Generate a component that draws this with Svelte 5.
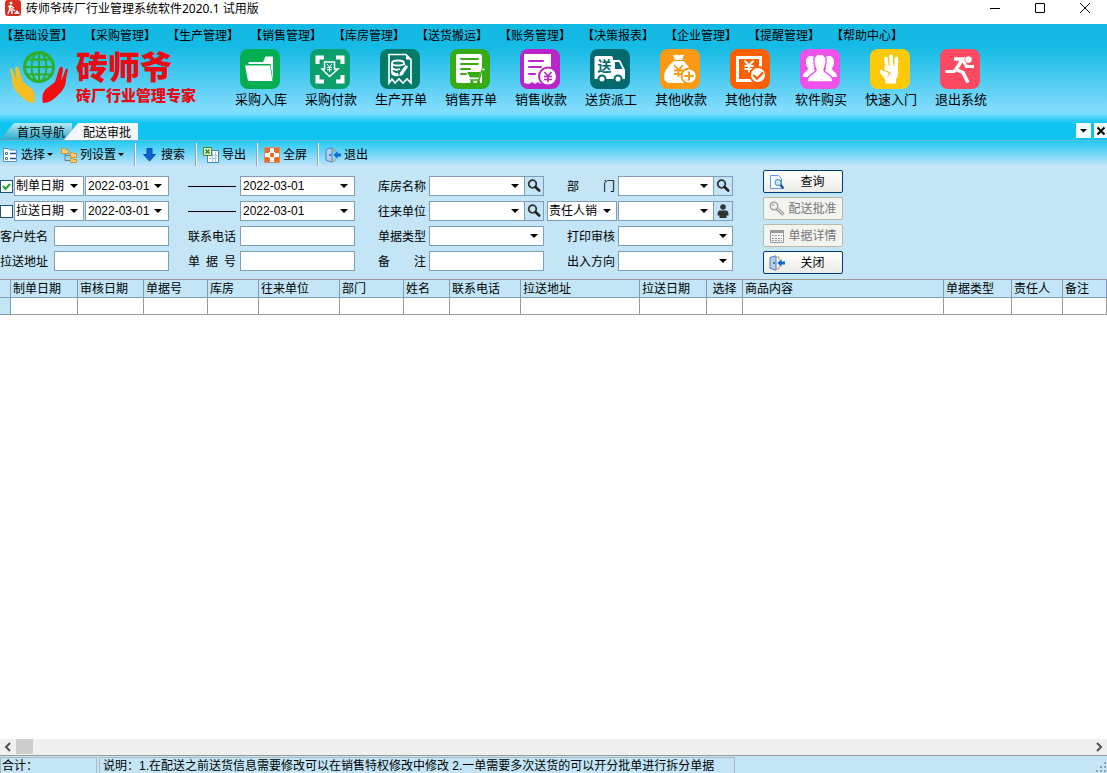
<script lang="ts">
    const menus = [
        "基础设置", "采购管理", "生产管理", "销售管理", "库房管理", "送货搬运",
        "账务管理", "决策报表", "企业管理", "提醒管理", "帮助中心",
    ];

    const shortcuts = [
        { icon: "folder", label: "采购入库", color: "#05ae50" },
        { icon: "scan", label: "采购付款", color: "#0c9f6e" },
        { icon: "receipt", label: "生产开单", color: "#067a68" },
        { icon: "cart", label: "销售开单", color: "#37ab14" },
        { icon: "bill", label: "销售收款", color: "#b924cb" },
        { icon: "truck", label: "送货派工", color: "#046a6f" },
        { icon: "bag", label: "其他收款", color: "#fb9a12" },
        { icon: "paid", label: "其他付款", color: "#fd6003" },
        { icon: "people", label: "软件购买", color: "#ee52ea" },
        { icon: "hand", label: "快速入门", color: "#fdc90b" },
        { icon: "run", label: "退出系统", color: "#fd4a62" },
    ];

    const columns = [
        { title: "制单日期", width: 67 },
        { title: "审核日期", width: 66 },
        { title: "单据号", width: 64 },
        { title: "库房", width: 51 },
        { title: "往来单位", width: 81 },
        { title: "部门", width: 64 },
        { title: "姓名", width: 46 },
        { title: "联系电话", width: 71 },
        { title: "拉送地址", width: 119 },
        { title: "拉送日期", width: 67 },
        { title: "选择", width: 36, center: true },
        { title: "商品内容", width: 201 },
        { title: "单据类型", width: 68 },
        { title: "责任人", width: 51 },
        { title: "备注", width: 0 },
    ];

    const date = "2022-03-01";
    let byMade = $state(true);
    let bySent = $state(false);
</script>

{#snippet door()}
    <svg class="ico" viewBox="0 0 16 16">
        <path d="M1 2.5 7 .8v14.4l-6-2z" fill="#b5d0ef" stroke="#4d7fbd" />
        <path d="M7.5 2H10v3M7.5 14H10v-3" fill="none" stroke="#c09a55" />
        <circle cx="5" cy="8" r="1" fill="#36598c" />
        <path d="M8.500 8l4-4v2.500H16v3h-3.500V12z" fill="#0b69d6" />
    </svg>
{/snippet}

{#snippet lens()}
    <svg class="ico" viewBox="0 0 16 16">
        <circle cx="6.5" cy="6" r="3.8" fill="none" stroke="#333" stroke-width="1.8" />
        <path d="M9.5 9l3.700 3.500" stroke="#222" stroke-width="2.600" stroke-linecap="round" />
    </svg>
{/snippet}

<div class="window">
    <header class="titlebar">
        <svg class="app-icon" viewBox="0 0 16 16">
            <rect width="16" height="16" rx="3" fill="#dc2a1c" />
            <circle cx="6" cy="3" r="1.5" fill="#fff" />
            <path d="M5.5 5 4.5 9l2.5 2v3M4.8 9 3 14M5.5 5.5 9 8M3 6l7 5" fill="none" stroke="#fff" stroke-width="1.4" />
            <path d="M9 14l3-4 3 4z" fill="#fff" />
        </svg>
        <h1>砖师爷砖厂行业管理系统软件2020.1 试用版</h1>
        <div class="win-buttons">
            <button aria-label="最小化"><svg viewBox="0 0 12 12"><path d="M1 6.5h10" /></svg></button>
            <button aria-label="最大化"><svg viewBox="0 0 12 12"><path d="M1.5 1.5h9v9h-9z" /></svg></button>
            <button aria-label="关闭窗口"><svg viewBox="0 0 12 12"><path d="M1 1l10 10M11 1 1 11" /></svg></button>
        </div>
    </header>

    <div class="banner">
        <nav class="menu">
            {#each menus as menu}
                <button>【{menu}】</button>
            {/each}
        </nav>

        <div class="launch">
            <div class="brand">
                <svg viewBox="0 0 60 56">
                    <g fill="none" stroke="#2fae23" stroke-width="2">
                        <circle cx="30" cy="18" r="14.5" stroke-width="3" />
                        <ellipse cx="30" cy="18" rx="7.5" ry="14.5" />
                        <path d="M30 3v30M15 18h30M18 10.500h24M18 25.500h24" />
                    </g>
                    <path d="M1 20c2-2 3 2 4 5l3 7-2-12c0-3 3-3 4 0l4 13 9 7c4 4 3 9 2 14-6 0-9-3-13-7C5 41 3 36 3 30z" fill="#f7be22" />
                    <path d="M59 20c-2-2-3 2-4 5l-3 7 2-12c0-3-3-3-4 0l-4 13-9 7c-4 4-4 9-3 14 6 0 10-3 14-7 7-6 9-11 9-17z" fill="#f20d10" />
                </svg>
                <div class="brand-text">
                    <strong>砖师爷</strong>
                    <span>砖厂行业管理专家</span>
                </div>
            </div>

            <div class="shortcuts">
                {#each shortcuts as item}
                    <button>
                        <svg viewBox="0 0 40 40">
                            <rect width="40" height="40" rx="8" fill={item.color} />
                            {#if item.icon == "folder"}
                                <path d="M8.500 13H23l2.500-5.500H33V31L30.500 15H8.500z" fill="#fff" />
                                <path d="M5 16.500h25L32.500 32H8z" fill="#fff" />
                            {:else if item.icon == "scan"}
                                <path d="M7.500 15V8.500H14M26 8.500h6.500V15M32.500 26v6.500H26M14 32.500H7.500V26" fill="none" stroke="#fff" stroke-width="4" />
                                <path d="M14.500 13h10v7H28l-8.500 7.500L12 20h2.500z" fill="none" stroke="#fff" stroke-width="1.500" />
                                <path d="M17 15l2.500 3 2.500-3M19.500 18v5M17 18.500h5M17 20.700h5" fill="none" stroke="#fff" />
                            {:else if item.icon == "receipt"}
                                <path d="M9 5.500h17l5 5V34l-4-4-4 4-4-4-4 4-3-4-3 4z" fill="none" stroke="#fff" stroke-width="1.600" />
                                <path d="M26 5.500v5h5z" fill="#fff" />
                                <g fill="none" stroke="#fff" stroke-width="1.800">
                                    <ellipse cx="18" cy="14" rx="6" ry="2.500" />
                                    <path d="M12 14v10c0 2 4 3 7 2M24 14v2M12 18.500c1 2 5 3 8 1.500M12 22.500c1 2 4 2.500 6 2" />
                                </g>
                                <path d="M25.500 15.500l3 2-6 9-3.500 1 .5-3.500z" fill="#fff" stroke="#067a68" stroke-width=".6" />
                            {:else if item.icon == "cart"}
                                <path d="M8 5h22a2 2 0 0 1 2 2v27H8a2 2 0 0 1-2-2V7a2 2 0 0 1 2-2z" fill="#fff" />
                                <path d="M11 10h17M11 15h17M11 20h9M11 25h5" stroke="#37ab14" stroke-width="2" stroke-linecap="round" />
                                <path d="M17 23h13.500l-1.500 5.500H20z" fill="#37ab14" />
                                <path d="M20 31h9l3-10.500h3" fill="none" stroke="#37ab14" stroke-width="1.500" />
                                <path d="M32 20.500h2.500" stroke="#fff" stroke-width="1.500" />
                                <circle cx="22" cy="33" r="1.700" fill="#37ab14" />
                                <circle cx="28.500" cy="33" r="1.700" fill="#37ab14" />
                            {:else if item.icon == "bill"}
                                <path d="M4 5h27v30l-4 0-3-2-3 2-3-2-3 2-3-2-3 2-5-1z" fill="#fff" />
                                <path d="M9 12h14M9 18h12M9 25h6" stroke="#b924cb" stroke-width="2" stroke-linecap="round" />
                                <circle cx="28" cy="27.500" r="9" fill="#fff" stroke="#b924cb" stroke-width="2" />
                                <path d="M24.500 23l3.500 4 3.500-4M28 27v6M24 27.500h8M24 30.500h8" fill="none" stroke="#b924cb" stroke-width="1.600" />
                            {:else if item.icon == "truck"}
                                <path d="M6.500 7H21a2 2 0 0 1 2 2v2h7l5 10v9H4.500V9a2 2 0 0 1 2-2z" fill="#fff" />
                                <path d="M25 13h4l3.500 7H25z" fill="#046a6f" />
                                <circle cx="12" cy="30" r="3.500" fill="#fff" stroke="#046a6f" stroke-width="2" />
                                <circle cx="28" cy="30" r="3.500" fill="#fff" stroke="#046a6f" stroke-width="2" />
                                <text x="7.500" y="22" fill="#046a6f" font-size="14" font-weight="700">送</text>
                            {:else if item.icon == "bag"}
                                <path d="M13 6c2 1 3-1 5 0s3-1 6 0l-2 5H15z" fill="#fff" />
                                <path d="M14 12h9c5 4 9 10 9 16 0 4-3 6-8 6H12c-5 0-8-2-8-6 0-6 5-12 10-16z" fill="#fff" />
                                <path d="M14 16l4.500 5 4.500-5M18.500 21v7M14 21.500h9M14 25h9" fill="none" stroke="#fb9a12" stroke-width="1.800" />
                                <circle cx="29" cy="27" r="7.500" fill="#fff" stroke="#fb9a12" stroke-width="1.800" />
                                <path d="M29 22.500v9M24.500 27h9" stroke="#fb9a12" stroke-width="2" />
                            {:else if item.icon == "paid"}
                                <path d="M6 7h26v26H6z" fill="#fff" />
                                <path d="M9 10h20v14l-5 6H9z" fill="#fd6003" />
                                <path d="M14.500 11.500l4.500 5 4.500-5M19 16.500v7M14.500 17h9M14.500 20h9" fill="none" stroke="#fff" stroke-width="2" />
                                <circle cx="28" cy="26" r="8" fill="#fff" stroke="#fd6003" stroke-width="2" />
                                <path d="M23.500 26l3.500 3.500 6-6" fill="none" stroke="#fd6003" stroke-width="2.400" />
                            {:else if item.icon == "people"}
                                <path d="M11 7c4 0 6 3 5 8-.5 3-2 4-2 5 0 2 4 2 5 8H3c0-5 4-5 5-8 0-2-2-3-2-6 0-4 1-7 5-7zM29 7c-4 0-6 3-5 8 .5 3 2 4 2 5 0 2-4 2-5 8h16c0-5-4-5-5-8 0-2 2-3 2-6 0-4-1-7-5-7z" fill="#fff" />
                                <path d="M20 5c5 0 7 4 6 9-.5 4-2 5-2 7 0 4 9 3 9 12H7c0-9 9-8 9-12 0-2-1.500-3-2-7-1-5 1-9 6-9z" fill="#fff" stroke="#ee52ea" stroke-width="1.500" />
                            {:else if item.icon == "hand"}
                                <path d="M17 18 16 9.500M21.500 18 21 7M26 18l.5-8.500" stroke="#fff" stroke-width="3.600" stroke-linecap="round" />
                                <path d="M14.500 17H28v8c0 3-2 4-2 6v3.500H15.500V31L10 23.500c-1-2 1-3 2.500-2.500l2 1z" fill="#fff" />
                                <path d="M12.500 20.500l7.500 3.500-2.500 3.500" fill="none" stroke="#fdb916" stroke-width="1.200" />
                            {:else}
                                <circle cx="28.500" cy="10.500" r="3.200" fill="#fff" />
                                <path d="M14 10h8.500L16 20.500l7 3 5 10" fill="none" stroke="#fff" stroke-width="3.500" />
                                <path d="M23 11.500l3.500 6H34M5.500 22.500h8.500l3-3" fill="none" stroke="#fff" stroke-width="3" />
                            {/if}
                        </svg>
                        <span>{item.label}</span>
                    </button>
                {/each}
            </div>
        </div>
    </div>

    <div class="tabs">
        <button class="tab">首页导航</button>
        <button class="tab active">配送审批</button>
        <div class="tab-tools">
            <button aria-label="标签列表"><i class="caret"></i></button>
            <button aria-label="关闭标签"><svg viewBox="0 0 10 10"><path d="M1.500 1.500l7 7M8.500 1.500l-7 7" stroke="#000" stroke-width="2" /></svg></button>
        </div>
    </div>

    <div class="toolbar">
        <div class="tool-group first">
            <button>
                <svg class="ico" viewBox="0 0 16 16">
                    <path d="M1.500 1.500h5l1 1.500h7v11.500h-13z" fill="#fff" stroke="#5b8fd0" />
                    <path d="M3.500 5.500h2v2h-2zM3.500 10.500h2v2h-2z" fill="none" stroke="#4a80c8" />
                    <path d="M8 6.500h6M8 11.500h6" stroke="#1f4fa0" stroke-width="1.500" />
                </svg>
                选择<i class="caret small"></i>
            </button>
            <button>
                <svg class="ico" viewBox="0 0 16 16">
                    <path d="M4 6v7.500h6M4 8.500h6" fill="none" stroke="#777" />
                    <path d="M.5 1.500h3l1 1h3v4h-7zM9.500 5.500h2l1 1h3v4h-6zM9.500 11.500h2l1 1h3v3h-6z" fill="#fbd277" stroke="#d1912d" />
                </svg>
                列设置<i class="caret small"></i>
            </button>
        </div>
        <div class="tool-group">
            <button>
                <svg class="ico" viewBox="0 0 16 16"><path d="M5 1.500h5v6h3.500L7.500 14 1.500 7.500H5z" fill="#0c62cf" stroke="#0a4aa8" /></svg>
                搜索
            </button>
        </div>
        <div class="tool-group">
            <button>
                <svg class="ico" viewBox="0 0 16 16">
                    <path d="M4.500 3.500h11v12h-11z" fill="#fff" stroke="#3e86c6" />
                    <path d="M6 8.500h8M6 11.500h8M9.500 5v10M12.500 5v10" stroke="#a9c9e7" />
                    <path d="M.5 .5h8v8h-8z" fill="#e6f6d8" stroke="#3e8c22" />
                    <path d="M2.500 2.500l4 4M6.500 2.500l-4 4" stroke="#2f8414" stroke-width="1.500" />
                </svg>
                导出
            </button>
        </div>
        <div class="tool-group">
            <button>
                <svg class="ico" viewBox="0 0 16 16">
                    <path d="M.5 .5h15v15H.5z" fill="#fff" stroke="#d98b61" />
                    <path d="M1 1h5v4H5v1H1zM10 1h5v5h-4V5h-1zM1 10h4v1h1v4H1zM11 10h4v5h-5v-4h1zM6 6h4v4H6z" fill="#ec6d28" />
                </svg>
                全屏
            </button>
        </div>
        <div class="tool-group">
            <button>{@render door()}退出</button>
        </div>
    </div>

    <form class="filters" onsubmit={(e) => e.preventDefault()}>
        <div class="group">
            <div class="pair">
                <input type="checkbox" aria-label="启用制单日期" bind:checked={byMade} />
                <select class="kind" aria-label="日期类型"><option>制单日期</option></select>
                <select class="date" aria-label="开始日期"><option>{date}</option></select>
            </div>
            <div class="pair">
                <input type="checkbox" aria-label="启用拉送日期" bind:checked={bySent} />
                <select class="kind" aria-label="第二日期类型"><option>拉送日期</option></select>
                <select class="date" aria-label="第二开始日期"><option>{date}</option></select>
            </div>
            <div class="field wide"><label for="customer">客户姓名</label><input id="customer" type="text" /></div>
            <div class="field wide"><label for="address">拉送地址</label><input id="address" type="text" /></div>
        </div>

        <div class="group">
            <div class="field"><span class="rule"></span><select class="date" aria-label="结束日期"><option>{date}</option></select></div>
            <div class="field"><span class="rule"></span><select class="date" aria-label="第二结束日期"><option>{date}</option></select></div>
            <div class="field"><label for="phone">联系电话</label><input id="phone" type="text" /></div>
            <div class="field"><label for="number">单 据 号</label><input id="number" type="text" /></div>
        </div>

        <div class="group third">
            <div class="field">
                <label for="store">库房名称</label>
                <div class="lookup"><select id="store"><option></option></select><button aria-label="查找库房">{@render lens()}</button></div>
            </div>
            <div class="field">
                <label for="partner">往来单位</label>
                <div class="lookup"><select id="partner"><option></option></select><button aria-label="查找单位">{@render lens()}</button></div>
            </div>
            <div class="field"><label for="type">单据类型</label><select id="type"><option></option></select></div>
            <div class="field"><label for="remark">备注</label><input id="remark" type="text" /></div>
        </div>

        <div class="group fourth">
            <div class="field">
                <label for="dept">部门</label>
                <div class="lookup"><select id="dept"><option></option></select><button aria-label="查找部门">{@render lens()}</button></div>
            </div>
            <div class="field owner">
                <select class="kind" aria-label="责任人类型"><option>责任人销</option></select>
                <div class="lookup">
                    <select aria-label="责任人"><option></option></select>
                    <button aria-label="查找责任人">
                        <svg class="ico" viewBox="0 0 16 16">
                            <circle cx="8" cy="4" r="2.800" fill="#333" />
                            <path d="M5 7.500h6c2 0 2.500 2 2.500 5h-2V15h-7v-2.500h-2c0-3 .5-5 2.500-5z" fill="#333" />
                        </svg>
                    </button>
                </div>
            </div>
            <div class="field"><label for="print">打印审核</label><select id="print"><option></option></select></div>
            <div class="field"><label for="direction">出入方向</label><select id="direction"><option></option></select></div>
        </div>

        <div class="actions">
            <button>
                <svg class="ico" viewBox="0 0 16 16">
                    <path d="M1.500 1.500h8l3 3v10h-11z" fill="#f3f9ff" stroke="#5f9ad2" />
                    <circle cx="9" cy="8.500" r="3" fill="#c3edf8" stroke="#3c89b6" />
                    <path d="M11.500 11l3 3.500" stroke="#17489c" stroke-width="2.200" />
                </svg>
                <span>查询</span>
            </button>
            <button disabled>
                <svg class="ico" viewBox="0 0 16 16">
                    <circle cx="5" cy="5" r="3.800" fill="none" stroke="#a2a2a2" stroke-width="1.500" />
                    <path d="M7.500 7.500l7 6" stroke="#a2a2a2" stroke-width="3.500" />
                    <path d="M8 7.500l6 5.500" stroke="#eee" />
                    <circle cx="4" cy="4" r="1" fill="#a2a2a2" />
                </svg>
                <span>配送批准</span>
            </button>
            <button disabled>
                <svg class="ico" viewBox="0 0 16 16">
                    <path d="M1.500 2.500h13v12h-13z" fill="#f5f5f5" stroke="#999" />
                    <path d="M1 2h14v3H1z" fill="#999" />
                    <path d="M3 7.500h10M3 10.500h10M3 12.500h10" stroke="#999" stroke-dasharray="2 1" />
                </svg>
                <span>单据详情</span>
            </button>
            <button>{@render door()}<span>关闭</span></button>
        </div>
    </form>

    <main class="grid">
        <table>
            <colgroup>
                <col style="width: 11px" />
                {#each columns as col}
                    <col style={col.width ? `width: ${col.width}px` : ""} />
                {/each}
            </colgroup>
            <thead>
                <tr>
                    <th></th>
                    {#each columns as col}
                        <th class:center={col.center}>{col.title}</th>
                    {/each}
                </tr>
            </thead>
            <tbody>
                <tr>
                    <td class="marker"></td>
                    {#each columns as col}
                        <td></td>
                    {/each}
                </tr>
            </tbody>
        </table>
    </main>

    <div class="scrollbar">
        <button aria-label="向左滚动"><svg viewBox="0 0 8 10"><path d="M6 1 2 5l4 4" /></svg></button>
        <div class="track"><div class="thumb"></div></div>
        <button aria-label="向右滚动"><svg viewBox="0 0 8 10"><path d="M2 1l4 4-4 4" /></svg></button>
    </div>

    <footer class="status">
        <div class="total">合计：</div>
        <div class="note">说明：1.在配送之前送货信息需要修改可以在销售特权修改中修改 2.一单需要多次送货的可以开分批单进行拆分单据</div>
        <svg class="grip" viewBox="0 0 12 12">
            <path d="M9 1h2v2H9zM5 5h2v2H5zM9 5h2v2H9zM1 9h2v2H1zM5 9h2v2H5zM9 9h2v2H9z" fill="#929da5" />
        </svg>
    </footer>
</div>

<style>
    :global(body) {
        margin: 0;
    }

    .window {
        display: flex;
        flex-direction: column;
        min-height: 100vh;
        background: #fff;
        color: #000;
        font: 12px/16px "Liberation Sans", "Noto Sans CJK SC", sans-serif;
        white-space: nowrap;
    }

    .window * {
        box-sizing: border-box;
    }

    button,
    input,
    select {
        margin: 0;
        padding: 0;
        font: inherit;
        color: inherit;
        border-radius: 0;
    }

    button {
        border: 0;
        background: none;
    }

    svg {
        display: block;
        flex: none;
    }

    .ico {
        width: 16px;
        height: 16px;
    }

    .caret {
        width: 8px;
        height: 4px;
        background: #000;
        clip-path: polygon(0 0, 100% 0, 50% 100%);
    }

    .caret.small {
        width: 6px;
        height: 3px;
        margin-left: -1px;
    }

    .titlebar {
        display: flex;
        height: 24px;
        padding-left: 5px;
        gap: 5px;
    }

    .app-icon {
        width: 16px;
        height: 16px;
    }

    h1 {
        flex: 1;
        margin: 0;
        font: 12px/18px "Noto Sans", "Noto Sans CJK SC", sans-serif;
    }

    .win-buttons {
        display: flex;
        height: 16px;
    }

    .win-buttons button {
        display: flex;
        width: 45px;
        align-items: center;
        justify-content: center;
    }

    .win-buttons svg {
        width: 12px;
        height: 12px;
        fill: none;
        stroke: #000;
    }

    .banner {
        height: 91px;
        background: linear-gradient(#12b9e3 0, #16bbe5 24px, #83dcfd 86px, #78dcfd 100%);
    }

    .menu {
        display: flex;
        height: 24px;
        padding-left: 1px;
    }

    .menu button {
        width: 83px;
        text-align: left;
    }

    .launch {
        display: flex;
        padding-top: 1px;
    }

    .brand {
        display: flex;
        width: 225px;
        padding-left: 9px;
        gap: 7px;
    }

    .brand svg {
        width: 60px;
        height: 56px;
    }

    .brand-text {
        display: flex;
        flex-direction: column;
        padding-top: 1px;
        color: #ea0a12;
    }

    .brand-text strong {
        font-size: 32px;
        line-height: 36px;
        font-weight: 900;
    }

    .brand-text span {
        font-size: 15px;
        line-height: 20px;
        font-weight: 900;
    }

    .shortcuts {
        display: flex;
    }

    .shortcuts button {
        display: flex;
        flex-direction: column;
        width: 70px;
        align-items: center;
        gap: 3px;
        font-size: 13px;
    }

    .shortcuts span {
        padding-left: 2px;
    }

    .shortcuts svg {
        width: 40px;
        height: 40px;
    }

    .tabs {
        display: flex;
        align-items: flex-end;
        height: 26px;
        border-bottom: 1px solid #68b8d2;
        background: linear-gradient(#67dafd, #10c4f2 8px);
    }

    .tab {
        width: 72px;
        height: 17px;
        padding: 2px 0 0 17px;
        background: linear-gradient(#b4ebf4, #2aa9cd);
        clip-path: polygon(14px 0, 100% 0, 100% 100%, 0 100%);
        text-align: left;
    }

    .tab.active {
        width: 74px;
        margin-left: -8px;
        padding-left: 19px;
        background: #f4f7fa;
    }

    .tab-tools {
        display: flex;
        margin: 0 0 2px auto;
        gap: 3px;
    }

    .tab-tools button {
        display: flex;
        width: 15px;
        height: 15px;
        align-items: center;
        justify-content: center;
        background: #f2fbfe;
    }

    .tab-tools button:last-child {
        width: 13px;
    }

    .tab-tools svg {
        width: 10px;
        height: 10px;
    }

    .toolbar {
        display: flex;
        height: 27px;
        background: linear-gradient(#22c9f4, #cfe6fb);
    }

    .tool-group {
        display: flex;
        width: 61px;
        height: 23px;
        margin-top: 2px;
        padding-left: 7px;
        border-left: 1px solid #8fa5b1;
        box-shadow: inset 1px 0 #eef8fd;
    }

    .tool-group.first {
        width: 134px;
        padding-left: 2px;
        gap: 8px;
        border: 0;
        box-shadow: none;
    }

    .tool-group button {
        display: flex;
        align-items: center;
        gap: 3px;
    }

    .filters {
        display: flex;
        height: 111px;
        padding-top: 2px;
        background: #c3e5f5;
    }

    .group {
        display: grid;
        grid-template-rows: repeat(4, 20px);
        gap: 5px;
        align-content: start;
        margin-right: 19px;
        padding-top: 6px;
    }

    .group.third {
        margin-left: 4px;
        margin-right: 3px;
    }

    .group.fourth {
        margin-right: 30px;
    }

    .pair {
        display: flex;
        align-items: center;
        gap: 1px;
    }

    .field {
        display: grid;
        grid-template-columns: 48px 115px;
        gap: 4px;
        align-items: center;
        justify-content: end;
    }

    .field.wide {
        grid-template-columns: 50px 115px;
    }

    .third .field,
    .fourth .field {
        gap: 3px;
    }

    .field.owner {
        grid-template-columns: 70px 115px;
        gap: 1px;
    }

    label {
        padding-top: 2px;
        text-align-last: justify;
    }

    .wide label {
        text-align-last: left;
    }

    .rule {
        height: 1px;
        background: #000;
    }

    input[type="text"],
    select {
        width: 100%;
        height: 20px;
        border: 1px solid #7f9db9;
        background-color: #fff;
        outline: 0;
    }

    select {
        appearance: none;
        padding: 0 1px;
        background-image: url("data:image/svg+xml,%3Csvg xmlns='http://www.w3.org/2000/svg' width='8' height='4'%3E%3Cpath d='M0 0h8L4 4z'/%3E%3C/svg%3E");
        background-repeat: no-repeat;
        background-position: right 5px center;
    }

    select.kind {
        width: 70px;
    }

    select.date {
        padding-left: 2px;
        background-position: right 6px center;
    }

    .pair select.date {
        width: 84px;
    }

    input[type="checkbox"] {
        appearance: none;
        width: 13px;
        height: 13px;
        border: 1px solid #1c5180;
        background: #fff;
    }

    input[type="checkbox"]:checked {
        background: #fff url("data:image/svg+xml,%3Csvg xmlns='http://www.w3.org/2000/svg' width='11' height='11'%3E%3Cpath d='M2 5l2.500 3L9 3' fill='none' stroke='%2321a121' stroke-width='2'/%3E%3C/svg%3E");
    }

    .lookup {
        display: flex;
    }

    .lookup button {
        display: flex;
        flex: none;
        width: 20px;
        height: 20px;
        margin-left: -1px;
        align-items: center;
        justify-content: center;
        border: 1px solid #7f9db9;
    }

    .actions {
        display: flex;
        flex-direction: column;
        gap: 4px;
    }

    .actions button {
        display: flex;
        width: 80px;
        height: 23px;
        padding: 0 5px;
        gap: 3px;
        align-items: center;
        border: 1px solid #003c74;
        border-radius: 2px;
        background: linear-gradient(#fff, #ecebe6);
    }

    .actions button span {
        flex: 1;
        text-align: center;
    }

    .actions button:disabled {
        border-color: #b9b8a6;
        background: #f4f4ee;
        color: #777;
    }

    .grid {
        flex: 1;
    }

    table {
        width: 100%;
        table-layout: fixed;
        border-collapse: separate;
        border-spacing: 0;
        border-top: 1px solid #999;
    }

    th {
        height: 18px;
        padding: 1px 0 0 2px;
        border-right: 1px solid #7f9db9;
        border-bottom: 1px solid #7f9db9;
        background: #c3e5f5;
        font-weight: 400;
        text-align: left;
    }

    th.center {
        padding-left: 0;
        text-align: center;
    }

    td {
        height: 17px;
        padding: 0;
        border-right: 1px solid #999;
        border-bottom: 1px solid #999;
    }

    td.marker {
        border-color: #7f9db9;
        background: #c3e5f5;
    }

    .scrollbar {
        display: flex;
        height: 16px;
        background: #f0f0f0;
    }

    .scrollbar button {
        display: flex;
        width: 16px;
        align-items: center;
        justify-content: center;
    }

    .scrollbar svg {
        width: 8px;
        height: 10px;
        fill: none;
        stroke: #505050;
        stroke-width: 2;
    }

    .track {
        flex: 1;
    }

    .thumb {
        width: 17px;
        height: 15px;
        background: #cdcdcd;
    }

    .status {
        display: flex;
        height: 18px;
        padding-top: 1px;
        gap: 2px;
        border-top: 1px solid #999;
        background: #c3e5f5;
    }

    .status div {
        border: 1px solid #adb9bf;
        border-bottom: 0;
        line-height: 17px;
    }

    .total {
        width: 97px;
        padding-left: 1px;
    }

    .note {
        width: 636px;
        padding-left: 3px;
        overflow: hidden;
    }

    .grip {
        width: 12px;
        height: 12px;
        margin: 4px 0 0 auto;
    }
</style>
